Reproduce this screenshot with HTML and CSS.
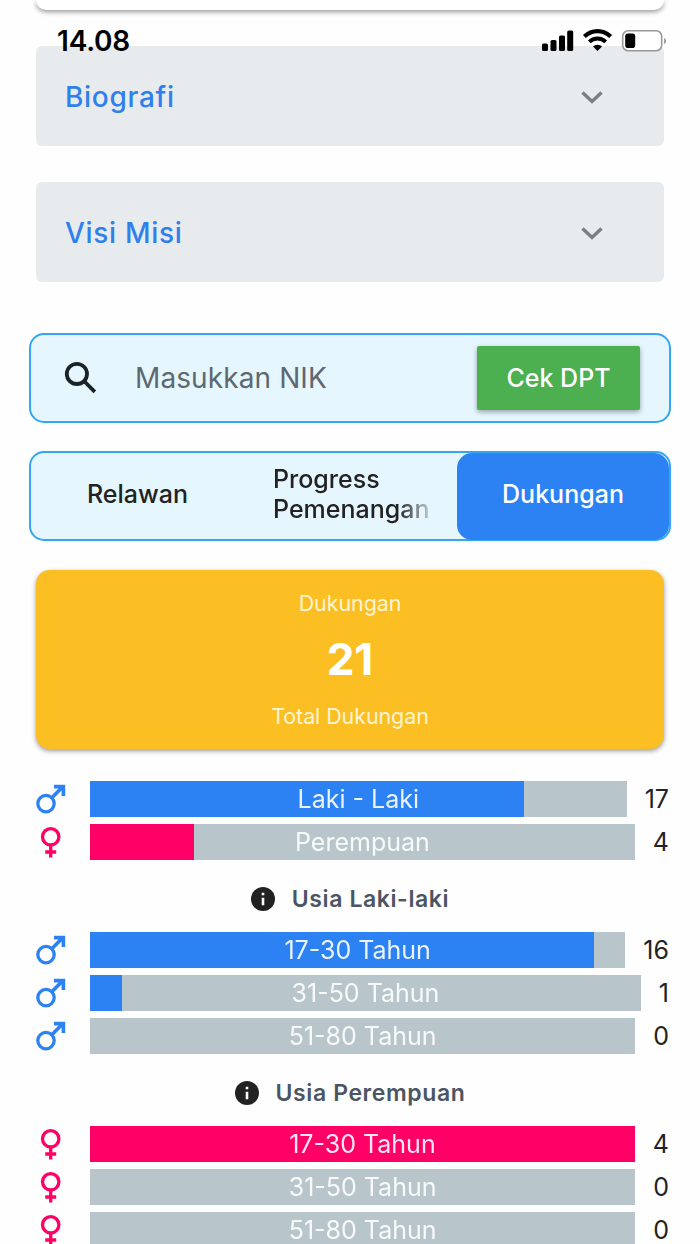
FILE: index.html
```html
<!DOCTYPE html>
<html lang="id">
<head>
    <meta charset="UTF-8">
    <meta name="viewport" content="width=device-width, initial-scale=1.0">
    <title>Dukungan</title>
    <link rel="stylesheet" href="styles.css">
</head>
<body>
    <svg class="sprite" width="0" height="0">
        <symbol id="male" viewBox="0 0 30 30">
            <circle cx="10" cy="19.6" r="8.2" fill="none" stroke="currentColor" stroke-width="3.3"/>
            <path d="M15.8 13.8L26 3.4M18 2.6h9.4V12" fill="none" stroke="currentColor" stroke-width="3.6"/>
        </symbol>
        <symbol id="female" viewBox="0 0 30 32">
            <circle cx="14.7" cy="10.8" r="8.2" fill="none" stroke="currentColor" stroke-width="3.3"/>
            <path d="M14.7 19v12.4M9.2 26h11" fill="none" stroke="currentColor" stroke-width="3.3"/>
        </symbol>
        <symbol id="chevron" viewBox="0 0 24 16">
            <path d="M2.500 3.500l9.500 9 9.500-9" fill="none" stroke="currentColor" stroke-width="3.4"/>
        </symbol>
        <symbol id="info" viewBox="0 0 24 24">
            <circle cx="12" cy="12" r="12" fill="currentColor"/>
            <path d="M10.7 5.7h2.6v2.6h-2.6zM10.7 10.8h2.6v7.5h-2.6z" fill="#fff"/>
        </symbol>
    </svg>

    <div class="status-bar">
        <span class="clock">14.08</span>
        <svg width="126" height="24" viewBox="0 0 126 24">
            <rect x="2" y="14.5" width="6" height="7.5" rx="1.6"/>
            <rect x="10.5" y="11" width="6" height="11" rx="1.6"/>
            <rect x="19" y="6.5" width="6" height="15.5" rx="1.6"/>
            <rect x="27.2" y="1.5" width="6" height="20.5" rx="1.6"/>
            <path d="M44.4 7.6a18.5 18.5 0 0 1 26.200 0" fill="none" stroke="#000" stroke-width="4.200"/>
            <path d="M49.300 12.900a11.700 11.700 0 0 1 16.400 0" fill="none" stroke="#000" stroke-width="3.900"/>
            <path d="M53 17.600a6.300 6.300 0 0 1 9 0l-4.500 4.500z"/>
            <rect x="82.700" y="1.700" width="39" height="20" rx="5.500" fill="#fff" stroke="#999" stroke-width="1.600"/>
            <rect x="85.200" y="4.500" width="10" height="14.500" rx="2.800"/>
            <path d="M124.200 9c2.200 1 2.200 5 0 6z" fill="#888"/>
        </svg>
    </div>

    <div class="container">
        <div class="top-card"></div>

        <div class="panel">
            <span>Biografi</span>
            <svg class="chevron"><use href="#chevron"/></svg>
        </div>
        <div class="panel">
            <span>Visi Misi</span>
            <svg class="chevron"><use href="#chevron"/></svg>
        </div>

        <div class="search">
            <svg class="search-icon" viewBox="0 0 34 34">
                <circle cx="12.900" cy="12.900" r="10.100"/>
                <path d="M20 20l10.800 10.800"/>
            </svg>
            <span class="placeholder">Masukkan NIK</span>
            <button class="btn-cek">Cek DPT</button>
        </div>

        <div class="tabs">
            <div class="tab">Relawan</div>
            <div class="tab tab-wide"><span class="fade">Progress<br>Pemenangan</span></div>
            <div class="tab active">Dukungan</div>
        </div>

        <div class="total">
            <div class="total-label">Dukungan</div>
            <div class="total-number">21</div>
            <div class="total-label">Total Dukungan</div>
        </div>

        <div class="chart">
            <div class="row male">
                <svg class="gender"><use href="#male"/></svg>
                <div class="track"><div class="fill" style="width: 80.95%"></div><span class="label">Laki - Laki</span></div>
                <span class="value">17</span>
            </div>
            <div class="row female">
                <svg class="gender"><use href="#female"/></svg>
                <div class="track"><div class="fill" style="width: 19.05%"></div><span class="label">Perempuan</span></div>
                <span class="value">4</span>
            </div>
        </div>

        <h3 class="heading"><svg class="info"><use href="#info"/></svg>Usia Laki-laki</h3>
        <div class="chart">
            <div class="row male">
                <svg class="gender"><use href="#male"/></svg>
                <div class="track"><div class="fill" style="width: 94.12%"></div><span class="label">17-30 Tahun</span></div>
                <span class="value">16</span>
            </div>
            <div class="row male">
                <svg class="gender"><use href="#male"/></svg>
                <div class="track"><div class="fill" style="width: 5.88%"></div><span class="label">31-50 Tahun</span></div>
                <span class="value">1</span>
            </div>
            <div class="row male">
                <svg class="gender"><use href="#male"/></svg>
                <div class="track"><div class="fill" style="width: 0%"></div><span class="label">51-80 Tahun</span></div>
                <span class="value">0</span>
            </div>
        </div>

        <h3 class="heading"><svg class="info"><use href="#info"/></svg>Usia Perempuan</h3>
        <div class="chart">
            <div class="row female">
                <svg class="gender"><use href="#female"/></svg>
                <div class="track"><div class="fill" style="width: 100%"></div><span class="label">17-30 Tahun</span></div>
                <span class="value">4</span>
            </div>
            <div class="row female">
                <svg class="gender"><use href="#female"/></svg>
                <div class="track"><div class="fill" style="width: 0%"></div><span class="label">31-50 Tahun</span></div>
                <span class="value">0</span>
            </div>
            <div class="row female">
                <svg class="gender"><use href="#female"/></svg>
                <div class="track"><div class="fill" style="width: 0%"></div><span class="label">51-80 Tahun</span></div>
                <span class="value">0</span>
            </div>
        </div>
    </div>
</body>
</html>
```
FILE: styles.css
```css
* {
    box-sizing: border-box;
}
body {
    font-family: Inter, "Liberation Sans", sans-serif;
    background-color: #fefefe;
    color: #222;
    margin: 0;
    height: 1244px;
    overflow: hidden;
}
.sprite {
    position: absolute;
}
.status-bar {
    position: absolute;
    top: 28px;
    left: 57px;
    right: 34px;
    height: 25px;
    display: flex;
    justify-content: space-between;
    align-items: center;
    z-index: 2;
}
.clock {
    font-size: 28px;
    font-weight: 600;
    letter-spacing: -0.2px;
    color: #000;
}
.top-card {
    height: 10px;
    margin: 0 36px;
    background-color: #fff;
    border-radius: 0 0 14px 14px;
    box-shadow: 0 2px 5px rgba(0, 0, 0, 0.4);
}
.panel {
    display: flex;
    justify-content: space-between;
    align-items: center;
    height: 100px;
    margin: 36px 36px 0;
    padding: 2px 60px 0 29px;
    background-color: #e8ebee;
    border-radius: 6px;
    color: #2f80ed;
    font-size: 28px;
    font-weight: 500;
    letter-spacing: 0.7px;
}
.chevron {
    width: 24px;
    height: 16px;
    color: #7c7f82;
}
.search,
.tabs {
    display: flex;
    align-items: center;
    height: 90px;
    margin: 51px 29px 0;
    background-color: #e5f6fe;
    border: 2px solid #35a7ee;
    border-radius: 15px;
}
.search {
    padding: 0 29px 0 33px;
}
.search-icon {
    width: 34px;
    height: 34px;
    margin-right: 37px;
    fill: none;
    stroke: #1c2326;
    stroke-width: 3.8;
}
.placeholder {
    flex: 1;
    color: #5e686e;
    font-size: 28px;
    letter-spacing: 0.1px;
}
.btn-cek {
    width: 163px;
    height: 64px;
    padding: 0;
    border: none;
    border-radius: 2px;
    background-color: #4caf50;
    box-shadow: 0 2px 5px rgba(0, 0, 0, 0.35);
    color: #fff;
    font-family: inherit;
    font-size: 25px;
    font-weight: 500;
    letter-spacing: 0;
}
.tabs {
    margin-top: 28px;
    font-size: 25px;
    font-weight: 500;
    letter-spacing: 0;
    line-height: 30px;
}
.tab {
    width: 213px;
    padding-bottom: 4px;
    text-align: center;
}
.tab-wide {
    padding-left: 29px;
    text-align: left;
    white-space: nowrap;
}
.fade {
    display: block;
    width: 157px;
    -webkit-mask-image: linear-gradient(to right, #000 125px, transparent 165px);
    mask-image: linear-gradient(to right, #000 125px, transparent 165px);
}
.tab.active {
    flex: 1;
    height: 87px;
    padding: 0;
    line-height: 82px;
    background-color: #2c82f2;
    border-radius: 15px;
    color: #fff;
}
.total {
    display: flex;
    flex-direction: column;
    align-items: center;
    height: 179px;
    margin: 29px 36px 32px;
    padding-top: 19px;
    background-color: #fbbf24;
    border-radius: 14px;
    box-shadow: 0 2px 5px rgba(0, 0, 0, 0.4);
}
.total-label {
    color: #fff4d2;
    font-size: 21.5px;
    line-height: 28px;
    letter-spacing: -0.1px;
}
.total-number {
    margin: 14px 0;
    color: #fff;
    font-size: 44px;
    font-weight: 700;
    line-height: 57px;
}
.chart {
    display: flex;
    flex-direction: column;
    gap: 7px;
    margin: 0 31px 0 36px;
}
.row {
    display: flex;
    align-items: center;
    height: 36px;
}
.male {
    color: #2c82f2;
}
.female {
    color: #ff0066;
}
.gender {
    width: 30px;
    height: 32px;
    margin-right: 24px;
}
.track {
    display: grid;
    flex: 1;
    height: 36px;
    background-color: #b8c6cb;
}
.fill,
.label {
    grid-area: 1 / 1;
}
.fill {
    background-color: currentColor;
}
.label {
    align-self: center;
    text-align: center;
    color: #fff;
    opacity: 0.9;
    font-size: 25px;
    letter-spacing: 0;
}
.value {
    margin-left: 18px;
    color: #222;
    font-size: 25px;
}
.heading {
    display: flex;
    justify-content: center;
    align-items: center;
    height: 72px;
    margin: 0;
    padding-top: 6px;
    color: #4b5563;
    font-size: 23px;
    font-weight: 600;
    letter-spacing: 0.6px;
}
.info {
    width: 24px;
    height: 24px;
    margin-right: 17px;
    color: #222;
}
```
